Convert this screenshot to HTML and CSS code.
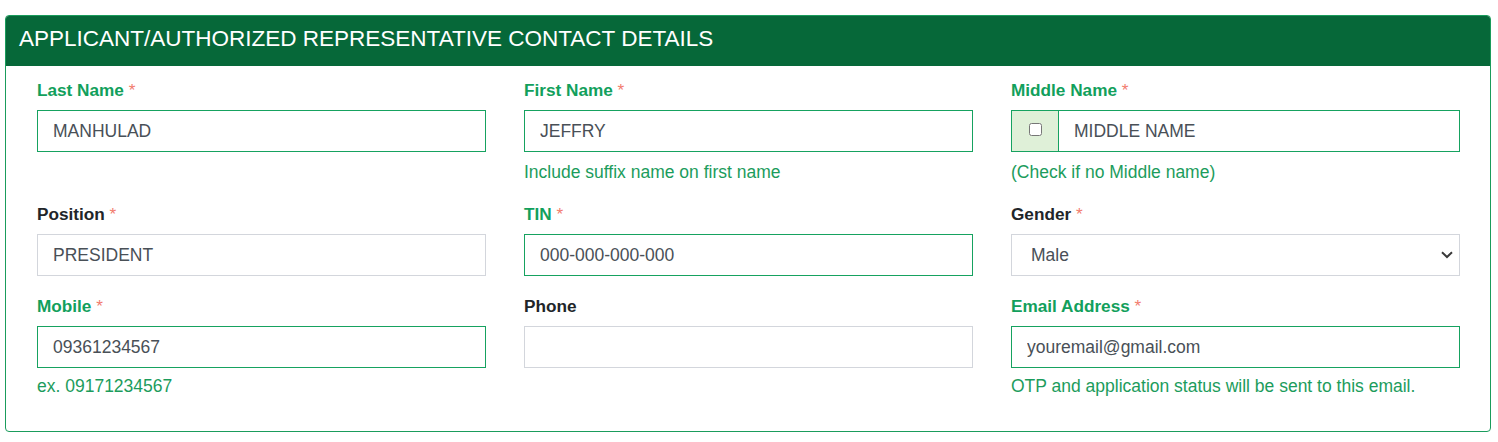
FILE: index.html
```html
<!DOCTYPE html>
<html lang="en">
<head>
<meta charset="utf-8">
<title>Contact Details</title>
<link rel="stylesheet" href="styles.css">
</head>
<body>
<section class="card">
  <header class="card-header">APPLICANT/AUTHORIZED REPRESENTATIVE CONTACT DETAILS</header>
  <div class="card-body">
    <div class="field">
      <label class="lbl ok">Last Name <span class="req">*</span></label>
      <input class="ctl ok" type="text" value="MANHULAD">
    </div>
    <div class="field">
      <label class="lbl ok">First Name <span class="req">*</span></label>
      <input class="ctl ok" type="text" value="JEFFRY">
      <div class="help">Include suffix name on first name</div>
    </div>
    <div class="field">
      <label class="lbl ok">Middle Name <span class="req">*</span></label>
      <div class="group">
        <span class="prepend"><input type="checkbox" class="chk"></span>
        <input class="ctl grp" type="text" value="MIDDLE NAME">
      </div>
      <div class="help">(Check if no Middle name)</div>
    </div>

    <div class="field">
      <label class="lbl">Position <span class="req">*</span></label>
      <input class="ctl" type="text" value="PRESIDENT">
    </div>
    <div class="field">
      <label class="lbl ok">TIN <span class="req">*</span></label>
      <input class="ctl ok" type="text" value="000-000-000-000">
    </div>
    <div class="field">
      <label class="lbl">Gender <span class="req">*</span></label>
      <div class="sel-wrap">
        <select class="ctl sel"><option>Male</option><option>Female</option></select>
        <svg class="chev" width="12" height="8" viewBox="0 0 12 8" aria-hidden="true"><path d="M1 1.2 L6 6 L11 1.2" fill="none" stroke="#3a3a3a" stroke-width="2"/></svg>
      </div>
    </div>

    <div class="field">
      <label class="lbl ok">Mobile <span class="req">*</span></label>
      <input class="ctl ok" type="text" value="09361234567">
      <div class="help last">ex. 09171234567</div>
    </div>
    <div class="field">
      <label class="lbl">Phone</label>
      <input class="ctl" type="text" value="">
    </div>
    <div class="field">
      <label class="lbl ok">Email Address <span class="req">*</span></label>
      <input class="ctl ok" type="text" value="youremail@gmail.com">
      <div class="help last">OTP and application status will be sent to this email.</div>
    </div>
  </div>
</section>
</body>
</html>
```

FILE: styles.css
```css
html, body {
  margin: 0;
  background: #ffffff;
}
body {
  padding: 15px 0 0 5px;
  font-family: "Liberation Sans", Arial, sans-serif;
  color: #212529;
}
.card {
  width: 1486px;
  box-sizing: border-box;
  border: 1px solid #1a9c5c;
  border-radius: 4px;
  overflow: hidden;
  background: #fff;
}
.card-header {
  background: #066839;
  color: #fff;
  height: 51px;
  box-sizing: border-box;
  margin: -1px -1px 0 -1px;
  padding: 0 0 3px 14px;
  display: flex;
  align-items: center;
  font-size: 22.5px;
  line-height: 28px;
}
.card-body {
  display: grid;
  grid-template-columns: repeat(3, 449px);
  column-gap: 38px;
  row-gap: 18px;
  padding: 12px 30px 33px 31px;
  align-items: start;
}
.field {
  display: flex;
  flex-direction: column;
}
.lbl {
  font-size: 17.2px;
  font-weight: bold;
  line-height: 24px;
  margin-bottom: 8px;
  color: #212529;
}
.lbl.ok {
  color: #12a05c;
}
.req {
  color: #f27b6e;
  font-weight: normal;
}
.ctl {
  height: 42px;
  box-sizing: border-box;
  border: 1px solid #d3d6dc;
  border-radius: 0;
  padding: 0 15px;
  font-family: "Liberation Sans", Arial, sans-serif;
  font-size: 17.5px;
  color: #495057;
  background: #fff;
  outline: none;
  width: 100%;
  margin: 0;
}
.ctl.ok {
  border-color: #16a260;
}
.sel-wrap {
  position: relative;
  display: flex;
}
.sel {
  appearance: none;
  -webkit-appearance: none;
  padding-left: 19px;
  padding-right: 30px;
}
.chev {
  position: absolute;
  right: 7px;
  top: 17px;
  pointer-events: none;
}
.group {
  display: flex;
  height: 42px;
  box-sizing: border-box;
  border: 1px solid #16a260;
}
.prepend {
  width: 46px;
  flex: none;
  background: #dff0d8;
  border-right: 1px solid #16a260;
  display: flex;
  align-items: center;
  justify-content: center;
}
.chk {
  width: 13px;
  height: 13px;
  margin: 0 0 4px 0;
}
.ctl.grp {
  border: 0;
  height: 40px;
  flex: 1;
  width: auto;
}
.help {
  margin-top: 8px;
  font-size: 17.5px;
  line-height: 24px;
  color: #1c9c5c;
}
.help.last {
  margin-top: 6px;
}
```
